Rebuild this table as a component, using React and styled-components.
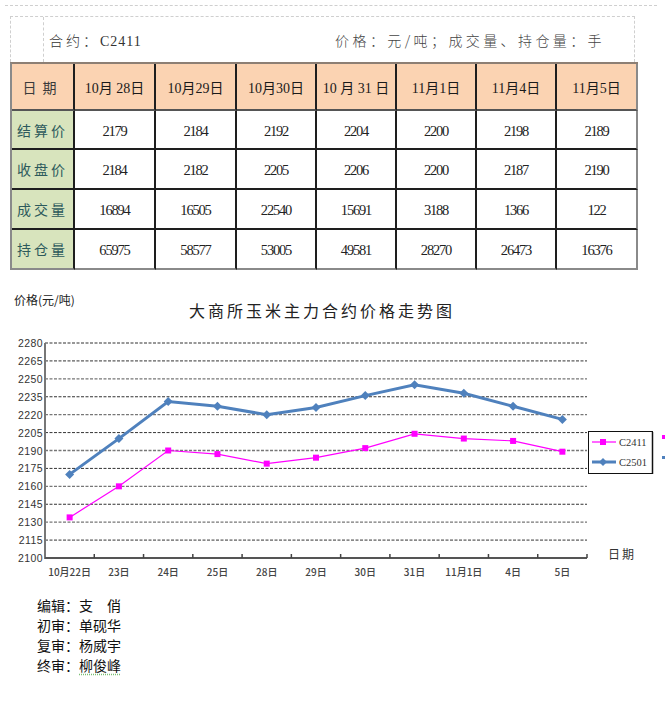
import React from 'react';
import styled, { createGlobalStyle } from 'styled-components';

const GlobalStyle = createGlobalStyle`
  html, body {
    margin: 0;
    padding: 0;
    background: #fff;
  }
  body {
    font-family: "Noto Sans CJK SC", "Liberation Sans", sans-serif;
    color: #222;
  }
`;

const Page = styled.div`
  width: 665px;
  height: 715px;
  display: flex;
  overflow: hidden;
`;

const Main = styled.div`
  flex: 0 0 660px;
  display: flex;
  flex-direction: column;
`;

// cut-off neighbour table at the right edge
const Edge = styled.div`
  flex: 1;
  padding-top: 47px;
`;

const EdgeCell = styled.div`
  height: 48px;
  background: #fbe3cf;
  border-left: 1px solid #555;
`;

const TopRule = styled.div`
  margin: 5px 8px 0 5px;
  border-top: 1px dashed #cfcfcf;
`;

const TitleBox = styled.div`
  margin: 10px 0 0 10px;
  width: 625px;
  height: 46px;
  box-sizing: border-box;
  border: 1px dashed #cfcfcf;
  border-bottom: none;
  display: flex;
  align-items: center;
`;

const TitleGap = styled.div`
  width: 32px;
  align-self: stretch;
  border-right: 1px dashed #cfcfcf;
`;

const TitleText = styled.div`
  flex: 1;
  display: flex;
  justify-content: space-between;
  align-items: center;
  padding: 0 29px 0 5px;
  font-size: 14px;
  color: #333;
`;

const Contract = styled.span`
  letter-spacing: 1px;
  font-family: "Liberation Serif", "Noto Sans CJK SC", serif;
  span {
    font-family: "Noto Sans CJK SC", sans-serif;
    font-weight: 300;
    letter-spacing: 3px;
  }
`;

const Units = styled.span`
  font-weight: 300;
  letter-spacing: 3.4px;
  color: #444;
`;

const Table = styled.table`
  margin-left: 10px;
  width: 626px;
  border-collapse: separate;
  border-spacing: 0;
  table-layout: fixed;
  border-top: 2px solid #8d7f74;
  border-left: 2px solid #8a8a8a;
`;

const Row = styled.tr`
  height: ${p => p.$h}px;
`;

const Cell = styled.td`
  box-sizing: border-box;
  padding: 0;
  text-align: center;
  vertical-align: middle;
  border-right: 2px solid ${p => (p.$lastCol ? '#8a8a8a' : '#1e1e1e')};
  border-bottom: 2px solid ${p => (p.$lastRow ? '#8a8a8a' : p.$head ? '#555' : '#1e1e1e')};
  background: ${p => (p.$head ? '#fbd3b2' : p.$label ? '#d8e4bd' : '#fff')};
  color: ${p => (p.$label ? '#2d5a5c' : p.$head ? '#3a3a3a' : '#1a1a1a')};
  font-size: 14px;
  letter-spacing: ${p => (p.$label ? '3px' : p.$head ? '6px' : '0')};
  font-weight: 400;
`;

const Num = styled.span`
  font-family: "Liberation Serif", serif;
  font-size: 14.5px;
  letter-spacing: -1.2px;
  color: #222;
`;

const HeadText = styled.span`
  font-family: "Liberation Serif", "Noto Sans CJK SC", serif;
  font-size: 14px;
  letter-spacing: 0;
  color: #1a1a1a;
  span {
    font-family: "Noto Sans CJK SC", sans-serif;
    font-weight: 400;
  }
`;

const Chart = styled.svg`
  display: block;
  margin-top: 11px;
  width: 665px;
  height: 306px;
`;

const Credits = styled.div`
  margin: 8px 0 0 37px;
  font-size: 14px;
  line-height: 20px;
  color: #111;
`;

const Sign = styled.span`
  text-decoration: underline dotted #7bbf74;
  text-underline-offset: 3px;
`;

const dates = ['10月 28日', '10月29日', '10月30日', '10 月 31 日', '11月1日', '11月4日', '11月5日'];
const rows = [
  { label: '结算价', vals: [2179, 2184, 2192, 2204, 2200, 2198, 2189], h: 39 },
  { label: '收盘价', vals: [2184, 2182, 2205, 2206, 2200, 2187, 2190], h: 40 },
  { label: '成交量', vals: [16894, 16505, 22540, 15691, 3188, 1366, 122], h: 40 },
  { label: '持仓量', vals: [65975, 58577, 53005, 49581, 28270, 26473, 16376], h: 40 },
];
const colWidths = [63, 81, 81, 80, 80, 80, 80, 81];

// render "10月28日" with digits in serif and CJK in sans
const DateLabel = ({ text }) => (
  <HeadText>
    {text.split(/([月日])/).map((part, i) =>
      part === '月' || part === '日' ? <span key={i}>{part}</span> : part
    )}
  </HeadText>
);

const xLabels = ['10月22日', '23日', '24日', '25日', '28日', '29日', '30日', '31日', '11月1日', '4日', '5日'];
const c2411 = [2134, 2160, 2190, 2187, 2179, 2184, 2192, 2204, 2200, 2198, 2189];
const c2501 = [2170, 2200, 2231, 2227, 2220, 2226, 2236, 2245, 2238, 2227, 2216];

const X0 = 45;
const X1 = 587;
const Y0 = 557;
const step = (X1 - X0) / 11;
const cx = i => X0 + step * (i + 0.5);
const cy = v => Y0 - ((v - 2100) * 215) / 180;
const ticks = [];
for (let v = 2100; v <= 2280; v += 15) ticks.push(v);

const pts = arr => arr.map((v, i) => `${cx(i).toFixed(1)},${cy(v).toFixed(1)}`).join(' ');

const Diamond = ({ x, y, r = 4.5 }) => (
  <polygon points={`${x},${y - r} ${x + r},${y} ${x},${y + r} ${x - r},${y}`} fill="#4f81bd" />
);

const PriceChart = () => (
  <Chart viewBox="0 280 665 306">
    <text x="14" y="304" fontSize="12" fill="#222" fontFamily="Noto Sans CJK SC, sans-serif">价格(元/吨)</text>
    <text x="322" y="316" fontSize="16" fill="#222" textAnchor="middle" letterSpacing="3"
      fontFamily="Noto Sans CJK SC, sans-serif">大商所玉米主力合约价格走势图</text>

    {ticks.filter(v => v > 2100).map((v, i) => (
      <line key={v} x1={X0} x2={X1} y1={cy(v)} y2={cy(v)}
        stroke={i % 2 ? '#777' : '#333'} strokeWidth={i % 2 ? 1.4 : 1} strokeDasharray="3 1.5" />
    ))}
    {ticks.map(v => (
      <text key={v} x="43" y={cy(v) + 4} fontSize="10.5" fill="#333" textAnchor="end"
        fontFamily="Liberation Sans, sans-serif" letterSpacing="0.4">{v}</text>
    ))}

    <line x1={X0} x2={X0} y1={cy(2280)} y2={Y0 + 1} stroke="#777" strokeWidth="2" />
    <line x1={X0} x2={X1} y1={Y0} y2={Y0} stroke="#555" strokeWidth="2" />
    {Array.from({ length: 11 }, (_, k) => (
      <line key={k} x1={X0 + step * (k + 1)} x2={X0 + step * (k + 1)} y1={Y0 - 4} y2={Y0}
        stroke="#444" strokeWidth="1.5" />
    ))}
    {xLabels.map((l, i) => (
      <text key={l} x={cx(i)} y="575" fontSize="10" fill="#444" textAnchor="middle" fontWeight="500"
        fontFamily="Noto Sans CJK SC, sans-serif">{l}</text>
    ))}
    <text x="608" y="558" fontSize="12" fill="#333" fontFamily="Noto Sans CJK SC, sans-serif"
      letterSpacing="2">日期</text>

    <polyline points={pts(c2501)} fill="none" stroke="#4f81bd" strokeWidth="3" />
    {c2501.map((v, i) => <Diamond key={i} x={cx(i)} y={cy(v)} />)}
    <polyline points={pts(c2411)} fill="none" stroke="#ff00ff" strokeWidth="1.2" />
    {c2411.map((v, i) => (
      <rect key={i} x={cx(i) - 3} y={cy(v) - 3} width="6" height="6" fill="#ff00ff" />
    ))}

    <rect x="588.5" y="430.5" width="64" height="42" fill="#fff" stroke="#111" strokeWidth="1" />
    <line x1="652.5" x2="652.5" y1="431" y2="473" stroke="#111" strokeWidth="1.5" />
    <line x1="592" x2="616" y1="441" y2="441" stroke="#ff00ff" strokeWidth="1.2" />
    <rect x="600" y="438" width="6" height="6" fill="#ff00ff" />
    <text x="619" y="445" fontSize="10.5" fill="#333" fontFamily="Liberation Serif, serif">C2411</text>
    <line x1="592" x2="616" y1="461" y2="461" stroke="#4f81bd" strokeWidth="3" />
    <Diamond x={603} y={461} r={4} />
    <text x="619" y="465" fontSize="10.5" fill="#333" fontFamily="Liberation Serif, serif">C2501</text>

    {/* edge of the next chart's legend */}
    <rect x="662" y="434" width="3" height="4" fill="#ff00ff" />
    <rect x="662" y="455" width="3" height="3" fill="#4f81bd" />
  </Chart>
);

export default function App() {
  return (
    <>
      <GlobalStyle />
      <Page>
        <Main>
          <TopRule />
          <TitleBox>
            <TitleGap />
            <TitleText>
              <Contract><span>合约：</span>C2411</Contract>
              <Units>价格：元/吨；成交量、持仓量：手</Units>
            </TitleText>
          </TitleBox>
          <Table>
            <colgroup>
              {colWidths.map((w, i) => <col key={i} style={{ width: w }} />)}
            </colgroup>
            <tbody>
              <Row $h={47}>
                <Cell $head>日期</Cell>
                {dates.map((d, i) => (
                  <Cell key={d} $head $lastCol={i === dates.length - 1}>
                    <DateLabel text={d} />
                  </Cell>
                ))}
              </Row>
              {rows.map((r, ri) => (
                <Row key={r.label} $h={r.h}>
                  <Cell $label $lastRow={ri === rows.length - 1}>{r.label}</Cell>
                  {r.vals.map((v, i) => (
                    <Cell key={i} $lastCol={i === r.vals.length - 1} $lastRow={ri === rows.length - 1}>
                      <Num>{v}</Num>
                    </Cell>
                  ))}
                </Row>
              ))}
            </tbody>
          </Table>
          <PriceChart />
          <Credits>
            <div>编辑：支　俏</div>
            <div>初审：单砚华</div>
            <div>复审：杨威宇</div>
            <div>终审：<Sign>柳俊峰</Sign></div>
          </Credits>
        </Main>
        <Edge>
          <EdgeCell />
        </Edge>
      </Page>
    </>
  );
}
